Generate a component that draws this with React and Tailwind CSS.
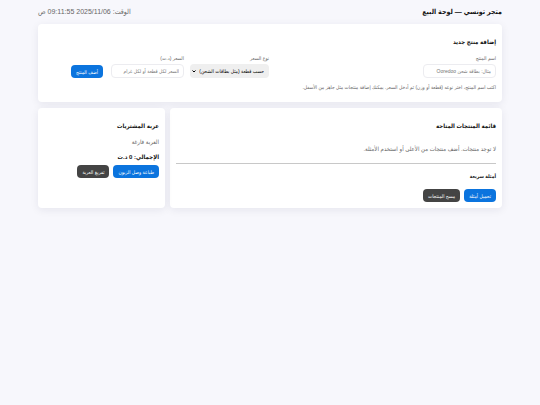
import React, { useState } from 'react';

const buttonBase = "h-[13px] px-[5px] rounded-[4px] text-[5px] leading-[6px] text-white whitespace-nowrap";
const card = "bg-white rounded-[4px] px-[6px] shadow-[0_2px_8px_rgba(20,20,60,0.08)]";

const Field = ({ id, label, className, children }) => (
    <div className={className}>
        <label htmlFor={id} className="block text-[5px] leading-[6px] text-[#666] mb-[3px]">{label}</label>
        {children}
    </div>
);

const App = () => {
    const [form, setForm] = useState({ name: '', type: 'piece', price: '' });

    const update = (field) => (e) => setForm({ ...form, [field]: e.target.value });

    return (
        <div dir="rtl" lang="ar" className="min-h-screen bg-[#f7f7fc] px-[38px] py-[7px] font-['Liberation_Sans','DejaVu_Sans_Condensed','DejaVu_Sans',sans-serif] text-[6px] leading-[8px] text-[#111]">
            <header className="flex items-center justify-between mb-[7px]">
                <h1 className="text-[7px] leading-[10px] font-bold">متجر تونسي — لوحة البيع</h1>
                <div className="text-[7px] leading-[10px] text-[#666]">الوقت: <span>2025/11/06 09:11:55 ص</span></div>
            </header>

            {/* ADD PRODUCT */}
            <section className={`${card} pt-[13px] pb-[11px] mb-[6px]`}>
                <h2 className="text-[6px] leading-[10px] font-bold mb-[8px]">إضافة منتج جديد</h2>
                <div className="flex items-end gap-[6px]">
                    <Field id="name" label="اسم المنتج" className="flex-1">
                        <input
                            id="name"
                            className="block w-[73px] h-[14px] px-[4px] rounded-[4px] border border-[#ececf0] bg-white text-[5px] leading-[8px] placeholder:text-[#757575]"
                            placeholder="مثال: بطاقة شحن Ooredoo"
                            value={form.name}
                            onChange={update('name')}
                        />
                    </Field>
                    <Field id="type" label="نوع السعر">
                        <div className="relative">
                            <select
                                id="type"
                                className="block appearance-none w-[79px] h-[14px] ps-[5px] pe-[8px] rounded-[4px] bg-[#efefef] text-[5px] leading-[8px] text-black"
                                value={form.type}
                                onChange={update('type')}
                            >
                                <option value="piece">حسب قطعة (مثل بطاقات الشحن)</option>
                                <option value="weight">حسب الوزن</option>
                            </select>
                            <svg className="absolute left-[2px] top-[6px] w-[4px] h-[3px] pointer-events-none" viewBox="0 0 8 6" fill="none" stroke="#000" strokeWidth="2">
                                <path d="M1 1l3 3 3-3" />
                            </svg>
                        </div>
                    </Field>
                    <Field id="price" label="السعر (د.ت)">
                        <input
                            id="price"
                            className="block w-[73px] h-[14px] px-[4px] rounded-[4px] border border-[#ececf0] bg-white text-[5px] leading-[8px] placeholder:text-[#757575]"
                            placeholder="السعر لكل قطعة أو لكل غرام"
                            value={form.price}
                            onChange={update('price')}
                        />
                    </Field>
                    <div className="w-[61px] ps-[2px]">
                        <button type="button" className={`${buttonBase} block bg-[#0b74de]`}>أضف المنتج</button>
                    </div>
                </div>
                <p className="mt-[5px] text-[5px] leading-[8px] text-[#666]">
                    اكتب اسم المنتج، اختر نوعه (قطعة أو وزن) ثم أدخل السعر. يمكنك إضافة منتجات مثل جاهز من الأسفل.
                </p>
            </section>

            <div className="flex gap-[5px]">
                {/* PRODUCT LIST */}
                <section className={`${card} flex-1 pt-[13px] pb-[6px]`}>
                    <h2 className="text-[6px] leading-[10px] font-bold">قائمة المنتجات المتاحة</h2>
                    <p className="mt-[14px] text-[#666]">لا توجد منتجات. أضف منتجات من الأعلى أو استخدم الأمثلة.</p>
                    <hr className="mt-[10px] border-[#c8c8c8]" />
                    <h3 className="mt-[8px] text-[5px] leading-[8px] font-bold">أمثلة سريعة</h3>
                    <div className="mt-[9px] flex gap-[4px]">
                        <button type="button" className={`${buttonBase} bg-[#0b74de]`}>تحميل أمثلة</button>
                        <button type="button" className={`${buttonBase} bg-[#444]`}>مسح المنتجات</button>
                    </div>
                </section>

                {/* CART */}
                <aside className={`${card} w-[127px] pt-[13px] pb-[6px]`}>
                    <h2 className="text-[6px] leading-[10px] font-bold">عربة المشتريات</h2>
                    <p className="mt-[7px] text-[#666]">العربة فارغة</p>
                    <p className="mt-[7px] font-bold">الإجمالي: <span>0</span> د.ت</p>
                    <div className="mt-[4px] flex gap-[4px]">
                        <button type="button" className={`${buttonBase} bg-[#0b74de]`}>طباعة وصل الزبون</button>
                        <button type="button" className={`${buttonBase} bg-[#444]`}>تفريغ العربة</button>
                    </div>
                </aside>
            </div>
        </div>
    );
};

export default App;
